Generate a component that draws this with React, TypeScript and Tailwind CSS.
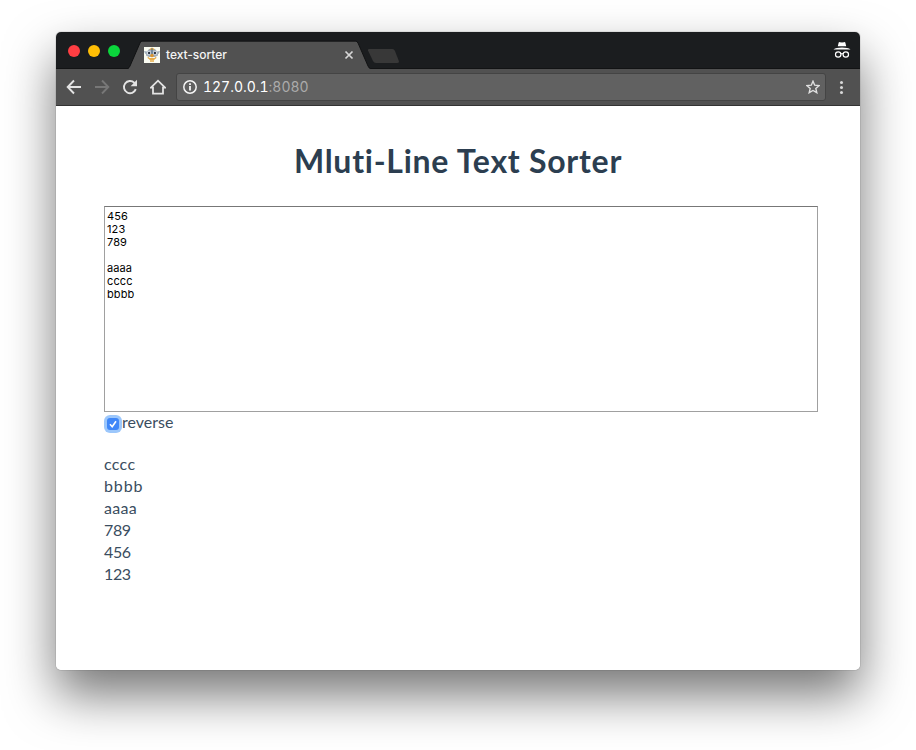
import React from "react";

const sorted = ["cccc", "bbbb", "aaaa", "789", "456", "123"];

function Favicon() {
  return (
    <svg width="16" height="16" viewBox="0 0 16 16" className="ml-[10px] block">
      <rect width="16" height="16" fill="#fbfdf3" />
      <path d="M0 4l3 .5L5 2h6l2 2.500 3-.5-1 2.500-1 .5v1.500l-3 1.500H5L2 8.500V7L1 6.500z" fill="#a3afbb" />
      <path d="M5.500 2L8 .5 10.500 2 10 3H6z" fill="#dfa543" />
      <path d="M7.300 1.500h1.400V7H7.300z" fill="#5f7990" />
      <circle cx="5" cy="6" r="2.100" fill="#dfe6ec" />
      <circle cx="11" cy="6" r="2.100" fill="#dfe6ec" />
      <circle cx="5.100" cy="6" r="1.200" fill="#2c3642" />
      <circle cx="10.900" cy="6" r="1.200" fill="#2c3642" />
      <path d="M7 7h2l1 2-2 1.500L6 9z" fill="#d9952f" />
      <path d="M4 9.500L5.500 11h5L12 9.500l.5 1.500-2.500 2H6L3.500 11zM6 13.300h4v1.400H6z" fill="#e8ad4a" />
    </svg>
  );
}

function TitleBar() {
  return (
    <div className="relative flex h-[37px] bg-[#1b1d1f]">
      <svg width="804" height="37" viewBox="0 0 804 37" className="absolute inset-0">
        <path d="M72 37Q73 36 74 34L84 11Q84.500 9.500 86 9.500H299.500Q301 9.500 302 11L312 34Q313 36.500 314.500 37Z" fill="#515151" />
        <path d="M0 36.500H72Q73 36 74 34L84 11Q84.500 9 86 9H299.500Q301 9 302 11L312 34Q313 36.500 314.500 36.500H804" fill="none" stroke="#121314" />
        <path d="M313 17H336.500Q338 17 339 19L343 29.500Q343 31 341 31H320Q318 31 317 29L312 18.500Q311.500 17 313 17Z" fill="#383838" />
      </svg>
      <div className="relative flex w-[78px] items-center gap-2 pl-3">
        <i className="h-3 w-3 shrink-0 rounded-full bg-[#ff3e43]" />
        <i className="h-3 w-3 shrink-0 rounded-full bg-[#ffbe05]" />
        <i className="h-3 w-3 shrink-0 rounded-full bg-[#0bd63c]" />
      </div>
      <div className="relative flex w-[228px] items-center pt-[9px]">
        <Favicon />
        <span className="ml-[6px] w-[178px] font-['Inter',sans-serif] text-[12px] font-medium leading-4 tracking-[-0.05px] text-[#f5f5f5]">text-sorter</span>
        <svg width="10" height="10" viewBox="0 0 10 10" className="block shrink-0">
          <path d="M1.500 1.500l7 7m0-7l-7 7" stroke="#d7d7d7" strokeWidth="1.700" />
        </svg>
      </div>
      <svg width="18" height="18" viewBox="0 0 18 18" className="relative ml-auto mr-[9px] mt-[9px]">
        <path d="M5.700 1.500Q6 .8 7 1.200L9 1.600l2-.4q1-.4 1.300.3L13.200 5.300H4.800z" fill="#fff" />
        <path d="M.5 8.400Q3 6.600 9 6.600t8.500 1.800z" fill="#fff" />
        <g fill="none" stroke="#fff" strokeWidth="1.200">
          <circle cx="5.200" cy="13.500" r="2.700" />
          <circle cx="12.800" cy="13.500" r="2.700" />
          <path d="M7.900 13q1.100-.7 2.200 0" />
        </g>
      </svg>
    </div>
  );
}

function Toolbar() {
  return (
    <div className="flex h-[37px] items-center border-b border-[#333] bg-[#515151] pl-[10px]">
      <div className="flex gap-3">
        <svg width="16" height="16" viewBox="0 0 16 16" fill="none" stroke="#e3e3e3" strokeWidth="1.900">
          <path d="M15 8H2M8 1.500L1.700 8 8 14.500" />
        </svg>
        <svg width="16" height="16" viewBox="0 0 16 16" fill="none" stroke="#777" strokeWidth="1.900">
          <path d="M1 8h13M8 1.500L14.300 8 8 14.500" />
        </svg>
        <svg width="16" height="16" viewBox="0 0 16 16">
          <path d="M13.800 10.200A6.100 6.100 0 1 1 12.300 3.700L14 5.200" fill="none" stroke="#e3e3e3" strokeWidth="1.900" />
          <path d="M15 .8v6.400H8.600z" fill="#e3e3e3" />
        </svg>
        <svg width="16" height="16" viewBox="0 0 16 16" fill="none" stroke="#e3e3e3" strokeWidth="1.800">
          <path d="M.9 8.700L8 1.700l7.100 7H13v6H3v-6z" />
        </svg>
      </div>
      <div className="ml-[10px] flex h-7 w-[650px] items-center rounded-[3px] border border-[#444] bg-[#616161] pl-[6px] pr-[5px]">
        <svg width="14" height="14" viewBox="0 0 14 14">
          <circle cx="7" cy="7" r="6.200" fill="none" stroke="#f5f5f5" strokeWidth="1.500" />
          <path d="M6.100 6h1.800v4.500H6.100zM6.100 3.300h1.800v1.700H6.100z" fill="#f5f5f5" />
        </svg>
        <span className="ml-[6px] font-['Inter',sans-serif] text-[14px] leading-5 tracking-[-0.02px] tabular-nums text-white">
          127.0.0.1<span className="text-[#ababab]">:8080</span>
        </span>
        <svg width="14" height="14" viewBox="0 0 14 14" className="ml-auto" fill="none" stroke="#e0e0e0" strokeWidth="1.400">
          <path d="M7 1.200l1.700 4 4.400.4-3.300 2.900 1 4.200L7 10.500l-3.800 2.200 1-4.200L.9 5.600l4.400-.4z" />
        </svg>
      </div>
      <div className="ml-[14px] flex flex-col gap-[2px]">
        <i className="h-[3px] w-[3px] rounded-full bg-[#d8d8d8]" />
        <i className="h-[3px] w-[3px] rounded-full bg-[#d8d8d8]" />
        <i className="h-[3px] w-[3px] rounded-full bg-[#d8d8d8]" />
      </div>
    </div>
  );
}

export default function App() {
  return (
    <div className="h-[750px] w-[916px] overflow-hidden bg-white px-[56px] pt-8">
      <div className="h-[638px] w-[804px] rounded-[5px] shadow-[0_0_1px_rgba(0,0,0,0.7),0_25px_50px_rgba(0,0,0,0.54)]">
        <div className="h-full overflow-hidden rounded-[5px] bg-white">
          <TitleBar />
          <Toolbar />
          <main className="pl-12 pr-[42px] font-['Lato',sans-serif] text-[#2c3e50]">
            <h1 className="-mr-[42px] -ml-12 pt-[35px] text-center text-[32px] font-bold leading-10 tracking-[0.74px]">Mluti-Line Text Sorter</h1>
            <textarea
              className="mt-[25px] block h-[206px] w-[714px] resize-none border border-[#a0a0a0] border-t-[#777] bg-white px-[2px] pt-[3px] font-['Inter',sans-serif] text-[11px] leading-[13px] tracking-[0.1px] text-black outline-none"
              defaultValue={"456\n123\n789\n\naaaa\ncccc\nbbbb"}
              spellCheck={false}
            />
            <label className="-mt-px flex h-[22px] items-center text-[16px] leading-[22px] text-[#3a4d60]">
              <span className="ml-[3px] mr-[3px] mt-[3px] flex h-3 w-3 items-center justify-center rounded-[3px] bg-[#3f87f8] shadow-[0_0_0_3px_#9cc7fb]">
                <svg width="12" height="12" viewBox="0 0 12 12" fill="none" stroke="#fff" strokeWidth="1.600">
                  <path d="M3 6.300l2.200 2.400L9 3.200" />
                </svg>
              </span>
              <span>reverse</span>
            </label>
            <div className="mt-5 text-[16px] leading-[22px] text-[#3a4d60]">
              {sorted.map((line) => (
                <div key={line} className={/\d/.test(line) ? "tracking-[-0.4px]" : line === "bbbb" ? "tracking-[0.9px]" : "tracking-[0.3px]"}>
                  {line}
                </div>
              ))}
            </div>
          </main>
        </div>
      </div>
    </div>
  );
}
